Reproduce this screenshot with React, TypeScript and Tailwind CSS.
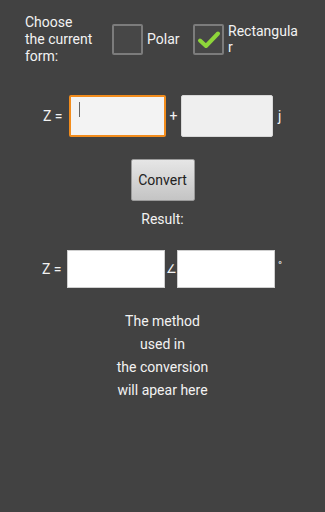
import React from 'react';

const Box: React.FC<{ checked?: boolean }> = ({ checked }) => (
  <div className="w-[31px] h-[31px] shrink-0 rounded-[2px] border-2 border-[#7c7c7c] bg-[#474747] flex items-center justify-center">
    {checked && (
      <svg width="24" height="20" viewBox="0 0 24 20">
        <path d="M3 10.5 L9 16 L21 3.5" fill="none" stroke="#8ed53a" strokeWidth="4" strokeLinecap="round" strokeLinejoin="round" />
      </svg>
    )}
  </div>
);

const App: React.FC = () => {
  return (
    <div className="w-[325px] h-[512px] bg-[#424242] text-[#f2f2f2] text-[14px] overflow-hidden" style={{ fontFamily: 'Roboto, "Liberation Sans", sans-serif' }}>
      <div className="flex items-center pl-[25px] pt-[14px]">
        <div className="w-[87px] leading-[17px]">
          Choose<br />the current<br />form:
        </div>
        <Box />
        <span className="ml-[4px] w-[46px]">Polar</span>
        <Box checked />
        <span className="ml-[4px] w-[72px] leading-[16px] break-all -mt-[2px]">Rectangular</span>
      </div>

      <div className="flex items-center pl-[43px] mt-[30px]">
        <span className="w-[26px]">Z =</span>
        <div className="w-[97px] h-[42px] rounded-[2px] border-2 border-[#f28c1c] bg-[#f3f3f3] relative">
          <div className="absolute left-[8px] top-[5px] w-px h-[15px] bg-[#666]" />
        </div>
        <span className="w-[15px] text-center">+</span>
        <div className="w-[92px] h-[42px] rounded-[2px] border border-[#d8d8d8] bg-[#efefef]" />
        <span className="ml-[5px]">j</span>
      </div>

      <div className="flex justify-center mt-[22px]">
        <button className="w-[64px] h-[42px] rounded-[2px] border border-[#9a9a9a] bg-gradient-to-b from-[#e6e6e6] to-[#c4c4c4] text-[#222] text-[14px]">Convert</button>
      </div>

      <div className="text-center mt-[10px] leading-[17px]">Result:</div>

      <div className="flex items-center pl-[42px] mt-[22px]">
        <span className="w-[25px]">Z =</span>
        <div className="w-[98px] h-[38px] bg-white border border-[#cfcfcf]" />
        <span className="w-[12px] text-center text-[12px]">∠</span>
        <div className="w-[98px] h-[38px] bg-white border border-[#cfcfcf]" />
        <span className="ml-[3px] -mt-[6px] text-[11px]">°</span>
      </div>

      <div className="text-center mt-[22px] leading-[23px]">
        <div>The method</div>
        <div>used in</div>
        <div>the conversion</div>
        <div>will apear here</div>
      </div>
    </div>
  );
};

export default App;
